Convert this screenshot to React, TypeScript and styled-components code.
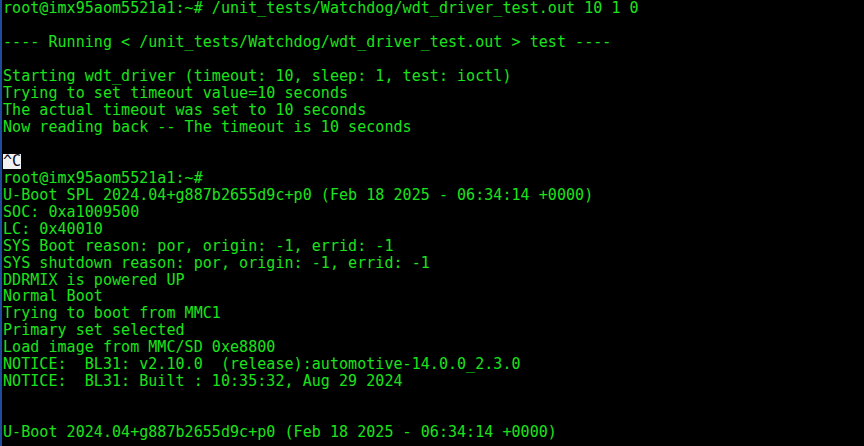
import React from "react";
import styled, { createGlobalStyle } from "styled-components";

const GlobalStyle = createGlobalStyle`
  html, body {
    margin: 0;
    padding: 0;
    background: #000;
    overflow: hidden;
  }
`;

const Window = styled.div`
  display: flex;
  width: 864px;
  height: 446px;
  background: #000;
  overflow: hidden;
`;

const Edge = styled.div`
  flex: 0 0 2px;
  background: #1e4b9c;
`;

const Terminal = styled.div`
  flex: 1;
  display: flex;
  flex-direction: column;
  padding-left: 1px;
  font-family: "DejaVu Sans Mono", "Liberation Mono", monospace;
  font-size: 15px;
  letter-spacing: 0.05px;
  line-height: 16.98px;
  color: #1ce21c;
  white-space: pre;
`;

const Line = styled.div`
  height: 16.98px;
`;

const Selected = styled.span`
  background: #f2f2f2;
  color: #0a0a1e;
  line-height: 15px;
  display: inline-block;
`;

const lines: string[] = [
  "root@imx95aom5521a1:~# /unit_tests/Watchdog/wdt_driver_test.out 10 1 0",
  "",
  "---- Running < /unit_tests/Watchdog/wdt_driver_test.out > test ----",
  "",
  "Starting wdt_driver (timeout: 10, sleep: 1, test: ioctl)",
  "Trying to set timeout value=10 seconds",
  "The actual timeout was set to 10 seconds",
  "Now reading back -- The timeout is 10 seconds",
  "",
  "^C",
  "root@imx95aom5521a1:~#",
  "U-Boot SPL 2024.04+g887b2655d9c+p0 (Feb 18 2025 - 06:34:14 +0000)",
  "SOC: 0xa1009500",
  "LC: 0x40010",
  "SYS Boot reason: por, origin: -1, errid: -1",
  "SYS shutdown reason: por, origin: -1, errid: -1",
  "DDRMIX is powered UP",
  "Normal Boot",
  "Trying to boot from MMC1",
  "Primary set selected",
  "Load image from MMC/SD 0xe8800",
  "NOTICE:  BL31: v2.10.0  (release):automotive-14.0.0_2.3.0",
  "NOTICE:  BL31: Built : 10:35:32, Aug 29 2024",
  "",
  "",
  "U-Boot 2024.04+g887b2655d9c+p0 (Feb 18 2025 - 06:34:14 +0000)",
];

export default function App() {
  return (
    <>
      <GlobalStyle />
      <Window>
        <Edge />
        <Terminal>
          {lines.map((l, i) => (
            <Line key={i}>
              {l === "^C" ? <Selected>^C</Selected> : l}
            </Line>
          ))}
        </Terminal>
      </Window>
    </>
  );
}
